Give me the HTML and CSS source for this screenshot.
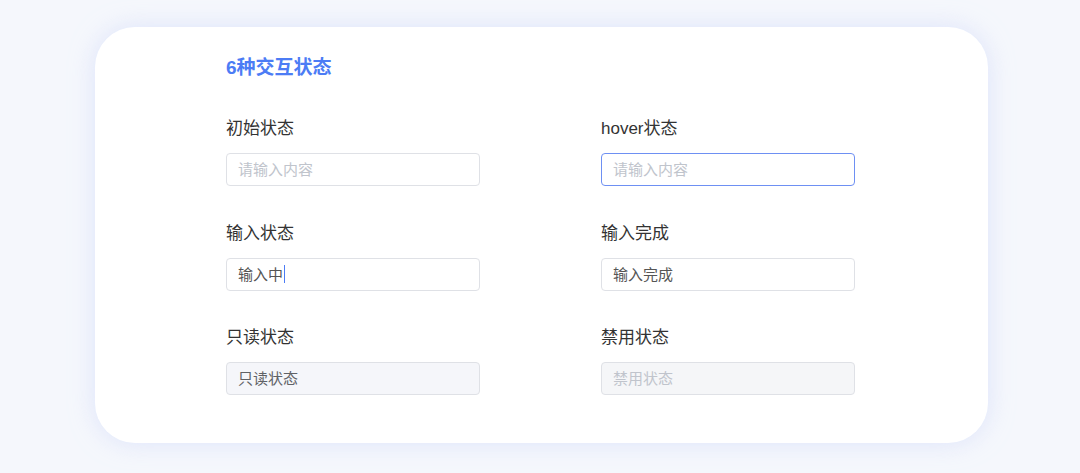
FILE: index.html
```html
<!DOCTYPE html>
<html>

<head>
    <meta charset="utf-8">
    <title>6种交互状态</title>
    <link rel="stylesheet" href="styles.css">
</head>

<body>
    <div class="card">
        <h1 class="title">6种交互状态</h1>
        <div class="grid">
            <div class="field">
                <div class="label">初始状态</div>
                <div class="input placeholder">请输入内容</div>
            </div>
            <div class="field">
                <div class="label">hover状态</div>
                <div class="input input-hover placeholder">请输入内容</div>
            </div>
            <div class="field">
                <div class="label">输入状态</div>
                <div class="input">输入中<span class="caret"></span></div>
            </div>
            <div class="field">
                <div class="label">输入完成</div>
                <div class="input">输入完成</div>
            </div>
            <div class="field">
                <div class="label">只读状态</div>
                <div class="input input-readonly">只读状态</div>
            </div>
            <div class="field">
                <div class="label">禁用状态</div>
                <div class="input input-disabled">禁用状态</div>
            </div>
        </div>
    </div>
</body>

</html>
```

FILE: styles.css
```css
body {
    margin: 0;
    padding: 27px 0 0;
    background-color: #f5f7fc;
    font-family: "Liberation Sans", "Noto Sans CJK SC", sans-serif;
    height: 473px;
    box-sizing: border-box;
    overflow: hidden;
}

.card {
    width: 893px;
    height: 416px;
    box-sizing: border-box;
    margin: 0 0 0 95px;
    padding: 28px 0 0 131px;
    background-color: #fff;
    border-radius: 40px;
    box-shadow: 0 0 24px rgba(205, 215, 250, 0.6);
}

.title {
    margin: 0;
    font-size: 19px;
    line-height: 26px;
    font-weight: bold;
    color: #4c7cf5;
}

.grid {
    display: grid;
    grid-template-columns: 254px 254px;
    column-gap: 121px;
    row-gap: 36.5px;
    margin-top: 37px;
}

.label {
    font-size: 17px;
    line-height: 22px;
    color: #333;
    margin-bottom: 13px;
}

.input {
    height: 33px;
    box-sizing: border-box;
    border: 1px solid #dfe1e6;
    border-radius: 4px;
    padding: 0 11px;
    font-size: 15px;
    line-height: 31px;
    color: #555;
    display: flex;
    align-items: center;
}

.placeholder {
    color: #c0c4cc;
}

.input-hover {
    border-color: #6e90f3;
}

.input-readonly {
    background-color: #f5f6fa;
    color: #606266;
}

.input-disabled {
    background-color: #f5f6f8;
    color: #c0c4cc;
}

.caret {
    display: inline-block;
    width: 1px;
    height: 18px;
    margin-left: 1px;
    background-color: #4c7cf5;
}
```
